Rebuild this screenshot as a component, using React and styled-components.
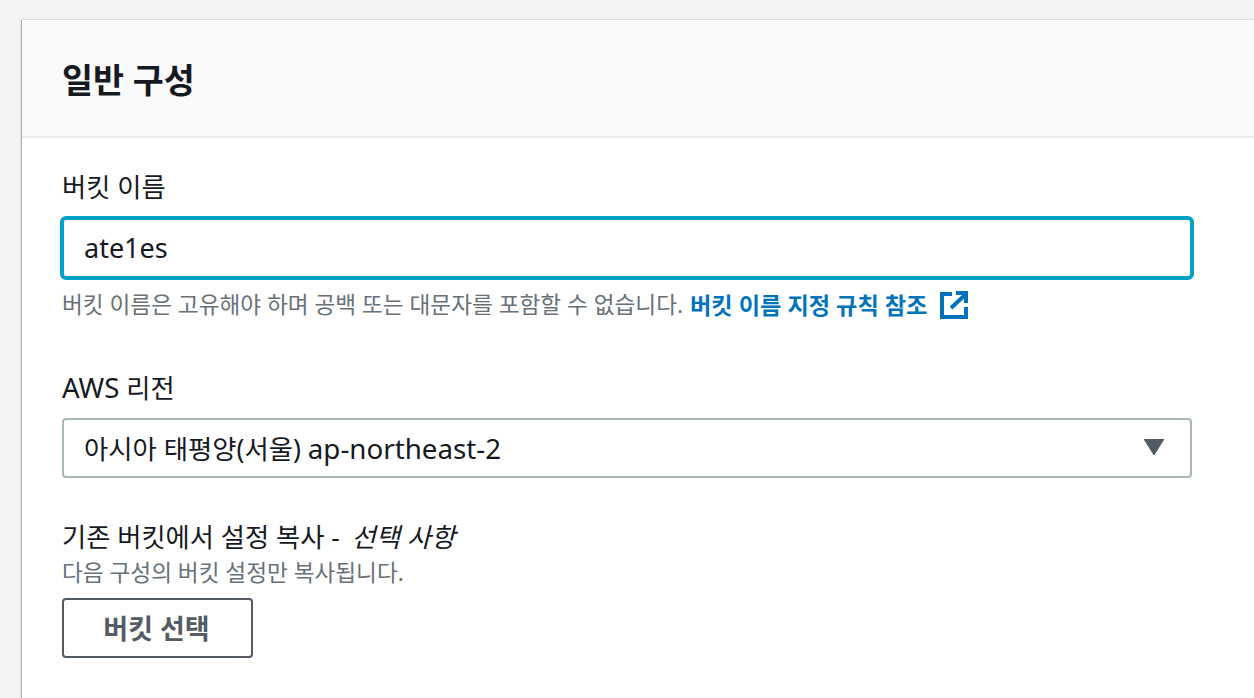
import React from "react";
import styled, { createGlobalStyle } from "styled-components";

const Global = createGlobalStyle`
  html, body { margin: 0; padding: 0; height: 100%; background: #f2f3f3; overflow: hidden; }
  body { font-family: "Noto Sans", "Noto Sans CJK KR", sans-serif; color: #16191f; }
`;

const Page = styled.div`
  height: 698px;
  padding: 20px 0 0 22px;
  box-sizing: border-box;
  overflow: hidden;
`;

const Panel = styled.section`
  background: #fff;
  height: 700px;
  box-shadow: -1px 0 1px rgba(0, 28, 36, 0.3), 0 -1px 1px rgba(0, 28, 36, 0.06);
`;

const Header = styled.header`
  height: 116px;
  display: flex;
  align-items: center;
  padding-left: 40px;
  background: #fafafa;
  border-bottom: 2px solid #eaeded;
`;

const Title = styled.h2`
  margin: 3px 0 0;
  font-size: 33.7px;
  line-height: 40px;
  font-weight: 700;
`;

const Body = styled.div`
  width: 1130px;
  margin-left: 40px;
  padding-top: 31px;
  display: flex;
  flex-direction: column;
`;

const Field = styled.div`
  display: flex;
  flex-direction: column;
  margin-bottom: ${(p) => p.$gap || 0}px;
`;

const Label = styled.label`
  font-size: 26.3px;
  line-height: 36px;
  height: 36px;
  margin-bottom: ${(p) => p.$gap || 0}px;
`;

const Latin = styled.span`
  font-size: 1.05em;
  line-height: 1;
`;

const Hint = styled.div`
  font-size: 22.63px;
  line-height: 30px;
  color: #687078;
  display: flex;
  align-items: center;
`;

const HelpLink = styled.a`
  color: #0073bb;
  font-size: 23.2px;
  font-weight: 700;
  margin-left: 7px;
  text-decoration: none;
  display: inline-flex;
  align-items: center;
  gap: 13px;
`;

const Input = styled.div`
  box-sizing: border-box;
  height: 64px;
  margin: 0 -2px 10px;
  border: 4px solid #00a1c9;
  border-radius: 6px;
  padding: 0 20px 2px;
  display: flex;
  align-items: center;
  font-size: 27px;
`;

const Select = styled.div`
  box-sizing: border-box;
  height: 60px;
  border: 2px solid #aab7b8;
  border-radius: 4px;
  padding: 0 26px 2px 20px;
  display: flex;
  align-items: center;
  justify-content: space-between;
  font-size: 26.4px;
`;

const Button = styled.button`
  box-sizing: border-box;
  width: 191px;
  height: 60px;
  margin-top: 10px;
  padding: 0 2px 2px 0;
  background: #fff;
  border: 2px solid #545b64;
  border-radius: 4px;
  color: #545b64;
  font: 700 27px "Noto Sans", "Noto Sans CJK KR", sans-serif;
`;

const Optional = styled.em`
  font-style: italic;
  margin-left: 5px;
`;

const ExternalIcon = () => (
  <svg width="28" height="28" viewBox="0 0 28 28" fill="none" stroke="#0073bb" strokeWidth="4">
    <path d="M12 3H2v23h24V16" />
    <path d="M11 17L25 4" />
    <path d="M16 2h10v10" />
  </svg>
);

const Caret = () => (
  <svg width="20" height="16" viewBox="0 0 20 16">
    <path d="M0 0h20L10 16z" fill="#545b64" stroke="#545b64" strokeLinejoin="round" />
  </svg>
);

export default function App() {
  return (
    <Page>
      <Global />
      <Panel>
        <Header>
          <Title>일반 구성</Title>
        </Header>
        <Body>
          <Field $gap={50}>
            <Label $gap={11}>버킷 이름</Label>
            <Input>ate1es</Input>
            <Hint>
              버킷 이름은 고유해야 하며 공백 또는 대문자를 포함할 수 없습니다.
              <HelpLink>
                버킷 이름 지정 규칙 참조
                <ExternalIcon />
              </HelpLink>
            </Hint>
          </Field>
          <Field $gap={41}>
            <Label $gap={12}>
              <Latin>AWS</Latin> 리전
            </Label>
            <Select>
              <span>
                아시아 태평양(서울) <Latin>ap-northeast-2</Latin>
              </span>
              <Caret />
            </Select>
          </Field>
          <Field>
            <Label $gap={3}>
              기존 버킷에서 설정 복사 - <Optional>선택 사항</Optional>
            </Label>
            <Hint>다음 구성의 버킷 설정만 복사됩니다.</Hint>
            <div>
              <Button>버킷 선택</Button>
            </div>
          </Field>
        </Body>
      </Panel>
    </Page>
  );
}
